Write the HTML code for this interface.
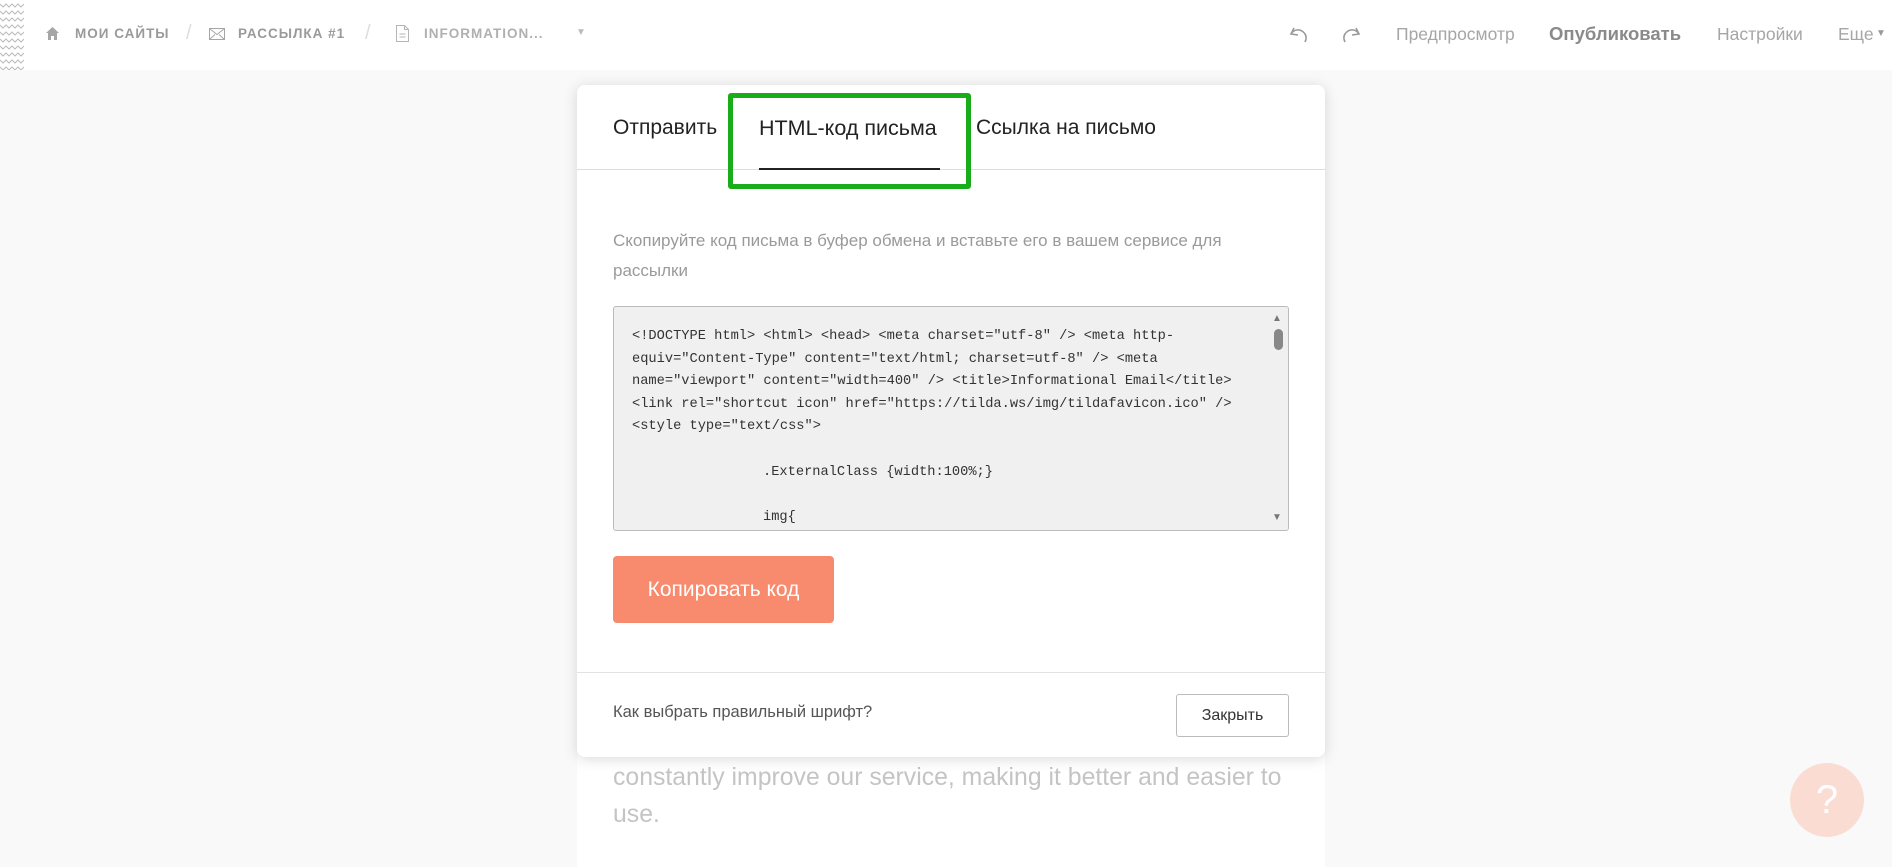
<!DOCTYPE html>
<html><head><meta charset="utf-8"><style>
*{margin:0;padding:0;box-sizing:border-box}
body{width:1892px;height:867px;background:#f9f9f9;font-family:"Liberation Sans",sans-serif;position:relative;overflow:hidden}
.a{position:absolute;white-space:nowrap}
.top{position:absolute;left:0;top:0;width:1892px;height:70px;background:#fff}
.bc{font-size:13.5px;font-weight:bold;color:#9a9a9a;letter-spacing:1px;top:26px}
.rt{font-size:17.5px;color:#a6a6a6;top:24px}
.code{font-family:"Liberation Mono",monospace;font-size:13.7px;color:#333;line-height:22.6px}
.code div{height:22.6px}
</style></head><body>
<div class="top"></div>
<svg class="a" style="left:0;top:0" width="24" height="70"><g fill="none" stroke="#bbb" stroke-width="1">
<path d="M0 4l3 3 3-3 3 3 3-3 3 3 3-3 3 3 3-3M0 11l3 3 3-3 3 3 3-3 3 3 3-3 3 3 3-3M0 18l3 3 3-3 3 3 3-3 3 3 3-3 3 3 3-3M0 25l3 3 3-3 3 3 3-3 3 3 3-3 3 3 3-3M0 32l3 3 3-3 3 3 3-3 3 3 3-3 3 3 3-3M0 39l3 3 3-3 3 3 3-3 3 3 3-3 3 3 3-3M0 46l3 3 3-3 3 3 3-3 3 3 3-3 3 3 3-3M0 53l3 3 3-3 3 3 3-3 3 3 3-3 3 3 3-3M0 60l3 3 3-3 3 3 3-3 3 3 3-3 3 3 3-3M0 67l3 3 3-3 3 3 3-3 3 3 3-3 3 3 3-3"/></g></svg>
<svg class="a" style="left:45px;top:26px" width="15" height="15"><path d="M7.5 1L1 7h2v7h3v-4h3v4h3V7h2z" fill="#a6a6a6"/></svg>
<div class="a bc" style="left:75px">МОИ САЙТЫ</div>
<div class="a" style="left:186px;top:22px;font-size:20px;color:#ddd">/</div>
<svg class="a" style="left:209px;top:28px" width="16" height="12"><rect x="0.5" y="0.5" width="15" height="11" fill="none" stroke="#a6a6a6"/><path d="M.5 .5l7.5 6 7.5-6M.5 11.5l5.5-5M15.5 11.5l-5.5-5" fill="none" stroke="#a6a6a6"/></svg>
<div class="a bc" style="left:238px">РАССЫЛКА #1</div>
<div class="a" style="left:365px;top:22px;font-size:20px;color:#ddd">/</div>
<svg class="a" style="left:396px;top:25px" width="13" height="17"><path d="M.5 .5h8l4 4v12h-12z M8.5 .5v4h4 M3.5 9h6M3.5 12h6" fill="none" stroke="#b5b5b5"/></svg>
<div class="a bc" style="left:424px;color:#b0b0b0">INFORMATION...</div>
<div class="a" style="left:576px;top:27px;font-size:10px;color:#bbb">▼</div>
<svg class="a" style="left:1288px;top:25px" width="22" height="18"><path d="M6 3L3 9l7 1M3 9c3-5 10-6 14 0 2 3 1 6 0 8" fill="none" stroke="#999" stroke-width="1.6"/></svg>
<svg class="a" style="left:1340px;top:25px" width="22" height="18"><path d="M16 3l3 6-7 1M19 9c-3-5-10-6-14 0-2 3-1 6 0 8" fill="none" stroke="#999" stroke-width="1.6"/></svg>
<div class="a rt" style="left:1396px">Предпросмотр</div>
<div class="a rt" style="left:1549px;font-weight:bold;color:#8a8a8a;font-size:18.5px;top:23px">Опубликовать</div>
<div class="a rt" style="left:1717px">Настройки</div>
<div class="a rt" style="left:1838px">Еще</div>
<div class="a" style="left:1876px;top:28px;font-size:10px;color:#999">▼</div>

<div class="a" style="left:577px;top:700px;width:748px;height:167px;background:#fff"></div>
<div class="a" style="left:613px;top:759px;font-size:24.8px;color:#c4c4c4;line-height:37px">constantly improve our service, making it better and easier to<br>use.</div>

<div class="a" style="left:577px;top:85px;width:748px;height:672px;background:#fff;border-radius:8px;box-shadow:0 2px 14px rgba(0,0,0,.15)">
<div class="a" style="left:0;top:84px;width:748px;height:1px;background:#ddd"></div>
<div class="a" style="left:36px;top:31px;font-size:21px;color:#222">Отправить</div>
<div class="a" style="left:182px;top:31px;font-size:21.5px;color:#222">HTML-код письма</div>
<div class="a" style="left:182px;top:83px;width:181px;height:2px;background:#222"></div>
<div class="a" style="left:399px;top:31px;font-size:21px;color:#222">Ссылка на письмо</div>
<div class="a" style="left:151px;top:8px;width:243px;height:96px;border:5px solid #1aad1a;border-radius:3px"></div>
<div class="a" style="left:36px;top:141px;font-size:17px;color:#9a9a9a;line-height:30px">Скопируйте код письма в буфер обмена и вставьте его в вашем сервисе для<br>рассылки</div>
<div class="a" style="left:36px;top:221px;width:676px;height:225px;background:#f0f0f0;border:1px solid #bbb;border-radius:3px;overflow:hidden">
<div class="a code" style="left:18px;top:19px">
<div>&lt;!DOCTYPE html&gt; &lt;html&gt; &lt;head&gt; &lt;meta charset="utf-8" /&gt; &lt;meta http-</div>
<div>equiv="Content-Type" content="text/html; charset=utf-8" /&gt; &lt;meta</div>
<div>name="viewport" content="width=400" /&gt; &lt;title&gt;Informational Email&lt;/title&gt;</div>
<div>&lt;link rel="shortcut icon" href="https://tilda.ws/img/tildafavicon.ico" /&gt;</div>
<div>&lt;style type="text/css"&gt;</div>
<div></div>
<div style="padding-left:131px">.ExternalClass {width:100%;}</div>
<div></div>
<div style="padding-left:131px">img{</div>
</div>
<div class="a" style="left:654px;top:0;width:20px;height:224px;background:#f0f0f0"></div>
<div class="a" style="left:658px;top:6px;font-size:10px;color:#777">▲</div>
<div class="a" style="left:660px;top:22px;width:9px;height:21px;background:#888;border-radius:5px"></div>
<div class="a" style="left:658px;top:205px;font-size:10px;color:#777">▼</div>
</div>
<div class="a" style="left:36px;top:471px;width:221px;height:67px;background:#f88a6d;border-radius:4px;color:#fff;font-size:21px;text-align:center;line-height:67px">Копировать код</div>
<div class="a" style="left:0;top:587px;width:748px;height:1px;background:#e2e2e2"></div>
<div class="a" style="left:36px;top:618px;font-size:16.5px;color:#555">Как выбрать правильный шрифт?</div>
<div class="a" style="left:599px;top:609px;width:113px;height:43px;border:1px solid #bbb;border-radius:3px;font-size:16px;color:#333;text-align:center;line-height:41px">Закрыть</div>
</div>

<div class="a" style="left:1790px;top:763px;width:74px;height:74px;border-radius:50%;background:#fbdcd3;color:#fff;font-size:40px;text-align:center;line-height:74px">?</div>
</body></html>
